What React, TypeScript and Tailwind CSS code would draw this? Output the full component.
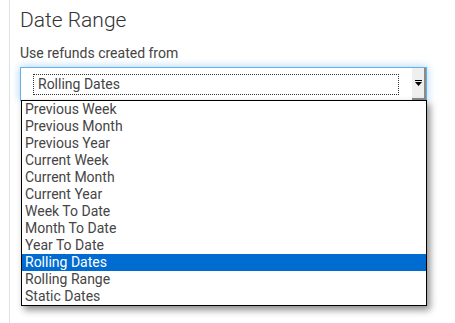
const options = [
  "Previous Week",
  "Previous Month",
  "Previous Year",
  "Current Week",
  "Current Month",
  "Current Year",
  "Week To Date",
  "Month To Date",
  "Year To Date",
  "Rolling Dates",
  "Rolling Range",
  "Static Dates",
];

const selected = "Rolling Dates";

export default function App() {
  return (
    <div className="h-[323px] w-[455px] overflow-hidden bg-white font-['Roboto','Liberation_Sans',sans-serif] text-[#333]">
      <div className="ml-[9px] h-full border-l border-[#e0e0e0] pl-[10px]">
        {/* Heading */}
        <h2 className="pt-[7px] text-[21px] font-light leading-[26px] text-[#333]">Date Range</h2>
        <p className="mt-[11px] text-[14px] leading-[18px] text-[#444]">Use refunds created from</p>

        {/* Select (open) */}
        <div className="relative mt-[5px] w-[407px]">
          <div className="flex h-[34px] items-stretch border border-[#66afe9] bg-white shadow-[0_0_8px_rgba(102,175,233,0.6)]">
            <div className="flex flex-1 items-center pl-[12px] pr-[13px]">
              <div className="flex h-[21px] w-full items-center border border-dotted border-[#333] pl-[4px] text-[14px] leading-[17px] text-[#444]">
                {selected}
              </div>
            </div>
            <div className="flex w-[14px] items-center justify-center bg-[#efefef] shadow-[inset_-2px_-2px_0_#8a8a8a]">
              <svg width="7" height="6" viewBox="0 0 7 6" className="-ml-[1px] -mt-[2px]">
                <rect x="0" y="0" width="7" height="1" fill="#000" />
                <path d="M0 2h7L3.5 6z" fill="#000" />
              </svg>
            </div>
          </div>

          {/* Dropdown list */}
          <ul className="absolute left-[1px] top-[33px] z-10 w-[406px] border border-black bg-white shadow-[3px_4px_7px_rgba(0,0,0,0.45)]">
            {options.map((o) => (
              <li
                key={o}
                className={`h-[17px] pl-[3px] text-[14px] leading-[17px] ${
                  o === selected ? "bg-[#006bd0] text-white" : "text-[#454545]"
                }`}
              >
                {o}
              </li>
            ))}
          </ul>
        </div>
      </div>
    </div>
  );
}
